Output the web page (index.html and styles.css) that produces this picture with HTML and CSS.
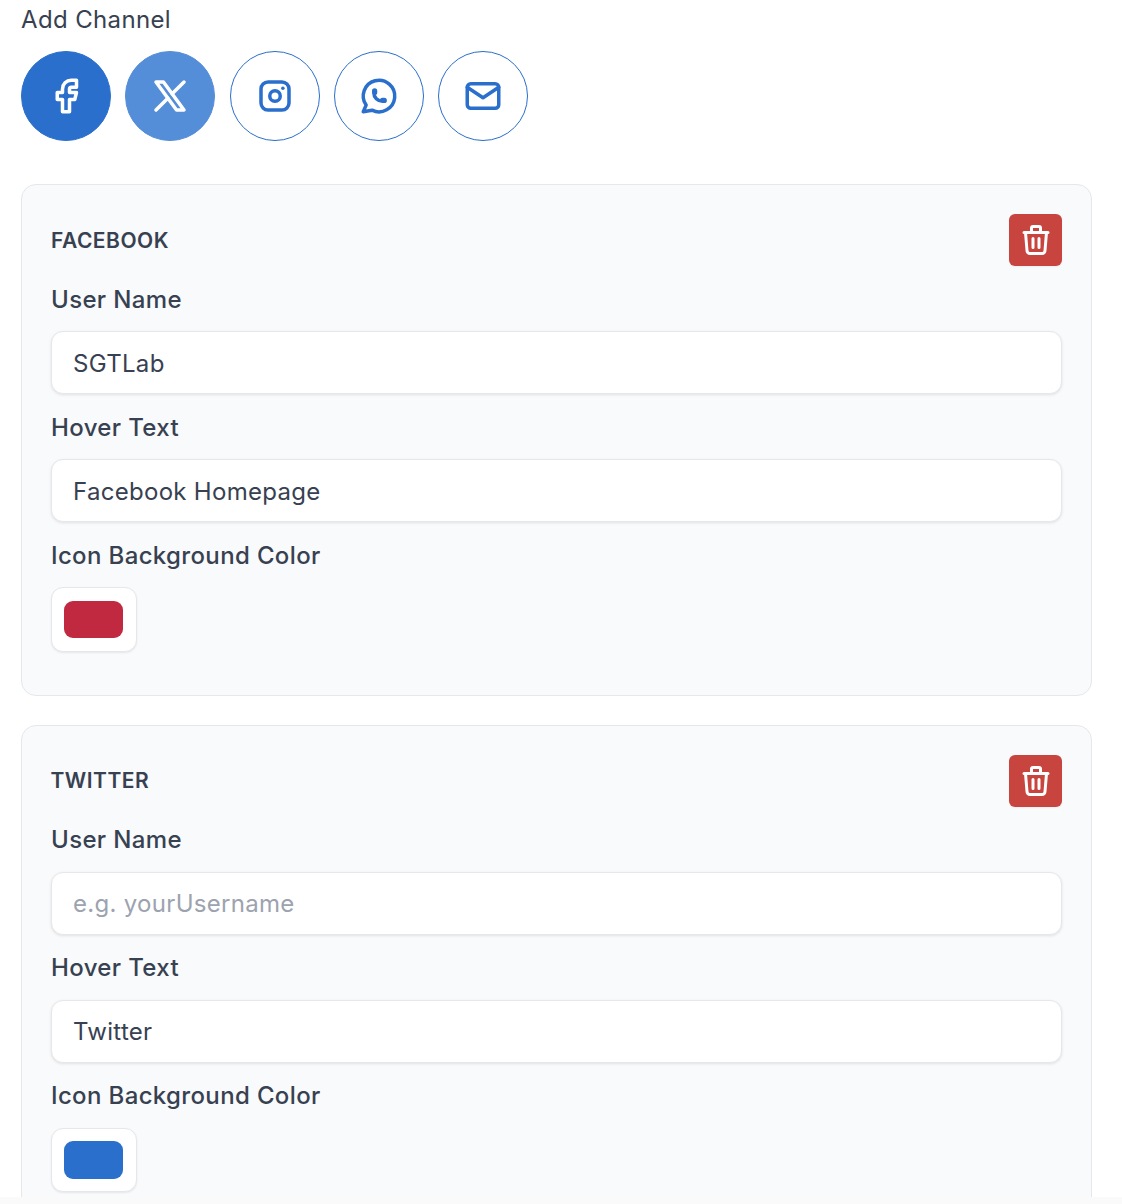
FILE: index.html
```html
<!DOCTYPE html>
<html lang="en">
<head>
<meta charset="utf-8">
<title>Add Channel</title>
<link rel="stylesheet" href="styles.css">
</head>
<body>
<main class="page">
  <div class="add-title">Add Channel</div>
  <div class="channels">
    <button class="channel active" type="button"><svg class="ch-icon" viewBox="0 0 24 24"><path d="M7 10v4h3v7h4v-7h3l1 -4h-4v-2a1 1 0 0 1 1 -1h3v-4h-3a5 5 0 0 0 -5 5v2h-3"/></svg></button>
    <button class="channel active-soft" type="button"><svg class="ch-icon" viewBox="0 0 24 24"><path d="M4 4l11.733 16h4.267l-11.733 -16z"/><path d="M4 20l6.768 -6.768m2.46 -2.46l6.772 -6.772"/></svg></button>
    <button class="channel" type="button"><svg class="ch-icon" viewBox="0 0 24 24"><rect x="4" y="4" width="16" height="16" rx="4"/><circle cx="12" cy="12" r="3"/><path d="M16.5 7.5v.01"/></svg></button>
    <button class="channel" type="button"><svg class="ch-icon" viewBox="0 0 24 24"><path d="M3 21l1.65 -3.8a9 9 0 1 1 3.4 2.9l-5.05 .9"/><path d="M9 10a.5 .5 0 0 0 1 0v-1a.5 .5 0 0 0 -1 0v1a5 5 0 0 0 5 5h1a.5 .5 0 0 0 0 -1h-1a.5 .5 0 0 0 0 1"/></svg></button>
    <button class="channel" type="button"><svg class="ch-icon" viewBox="0 0 24 24"><rect x="3" y="5" width="18" height="14" rx="2"/><path d="M3 7l9 6l9 -6"/></svg></button>
  </div>

  <section class="card">
    <header class="card-head">
      <h2 class="card-title">FACEBOOK</h2>
      <button class="delete" type="button"><svg class="trash" viewBox="0 0 24 24"><path d="M4 7h16M10 11v6M14 11v6M5 7l1 12a2 2 0 0 0 2 2h8a2 2 0 0 0 2 -2l1 -12M9 7v-3a1 1 0 0 1 1 -1h4a1 1 0 0 1 1 1v3"/></svg></button>
    </header>
    <label class="field-label">User Name</label>
    <input class="field" type="text" value="SGTLab" placeholder="e.g. yourUsername">
    <label class="field-label">Hover Text</label>
    <input class="field" type="text" value="Facebook Homepage">
    <label class="field-label">Icon Background Color</label>
    <div class="swatch-box"><div class="swatch swatch-red"></div></div>
  </section>

  <section class="card card-clipped">
    <header class="card-head">
      <h2 class="card-title">TWITTER</h2>
      <button class="delete" type="button"><svg class="trash" viewBox="0 0 24 24"><path d="M4 7h16M10 11v6M14 11v6M5 7l1 12a2 2 0 0 0 2 2h8a2 2 0 0 0 2 -2l1 -12M9 7v-3a1 1 0 0 1 1 -1h4a1 1 0 0 1 1 1v3"/></svg></button>
    </header>
    <label class="field-label">User Name</label>
    <input class="field" type="text" placeholder="e.g. yourUsername">
    <label class="field-label">Hover Text</label>
    <input class="field" type="text" value="Twitter">
    <label class="field-label">Icon Background Color</label>
    <div class="swatch-box"><div class="swatch swatch-blue"></div></div>
  </section>
</main>
</body>
</html>
```

FILE: styles.css
```css
* { box-sizing: border-box; }
html, body { margin: 0; height: 100%; overflow: hidden; background: #fafafa; }
body { font-family: Inter, "Noto Sans", sans-serif; color: #374151; }

.page {
  height: 1197px;
  overflow: hidden;
  background: #fff;
  padding: 1px 30px 0 21px;
}
.add-title { font-size: 24px; line-height: 36px; margin-bottom: 14px; letter-spacing: 0.36px; padding-top: 1px; height: 36px; }
.channels { display: flex; gap: 14.3px; margin-bottom: 43px; }
.channel {
  width: 90px; height: 90px; padding: 0;
  display: flex; align-items: center; justify-content: center;
  border: 1px solid #2a6fcb; border-radius: 50%;
  background: #fff; color: #2a6fcb;
}
.channel.active { background: #2a6fcb; color: #fff; }
.channel.active-soft { background: #548dd8; border-color: #548dd8; color: #fff; }
.ch-icon {
  width: 42px; height: 42px;
  fill: none; stroke: currentColor; stroke-width: 2;
  stroke-linecap: round; stroke-linejoin: round;
}

.card {
  height: 512px;
  margin-bottom: 29px;
  padding: 29px 29px 0;
  background: #f9fafb;
  border: 1px solid #e5e7eb;
  border-radius: 15px;
}
.card-head { display: flex; justify-content: space-between; align-items: center; margin-bottom: 16px; }
.card-title { margin: 0; padding-top: 1px; font-size: 21px; line-height: 30px; font-weight: 600; letter-spacing: 0.5px; }
.delete {
  width: 53px; height: 52px; padding: 0;
  display: flex; align-items: center; justify-content: center;
  border: 0; border-radius: 6px;
  background: #c8443f; color: #fff;
  box-shadow: 0 1px 2px rgba(0,0,0,.05);
}
.trash {
  width: 36px; height: 36px;
  fill: none; stroke: currentColor; stroke-width: 2;
  stroke-linecap: round; stroke-linejoin: round;
}
.field-label { display: block; font-size: 24px; line-height: 36px; font-weight: 450; margin-bottom: 13px; letter-spacing: 0.36px; }
.field {
  display: block; width: 100%; height: 63px;
  margin-bottom: 16px;
  padding: 2px 21px 0;
  font: 400 24px Inter, "Noto Sans", sans-serif;
  letter-spacing: 0.3px;
  color: #374151;
  background: #fff;
  border: 1px solid #e5e7eb;
  border-radius: 12px;
  box-shadow: 0 1px 3px rgba(0,0,0,.1);
  outline: none;
}
.field::placeholder { color: #9ca3af; opacity: 1; }
.swatch-box {
  width: 86px; height: 65px;
  padding-right: 1px;
  display: flex; align-items: center; justify-content: center;
  background: #fff;
  border: 1px solid #e5e7eb;
  border-radius: 12px;
  box-shadow: 0 1px 2px rgba(0,0,0,.08);
}
.swatch { width: 59px; height: 37px; border-radius: 9px; }
.swatch-red { background: #c0293f; }
.swatch-blue { background: #2a6fcb; }

.card-clipped { height: 520px; }
.card-clipped .card-head { margin-bottom: 15px; }
.card-clipped .card-title { padding-top: 0; margin-left: -0.5px; }
.card-clipped .field-label { margin-bottom: 14px; }
.card-clipped .field { padding-top: 0; margin-bottom: 15px; }
.card-clipped .swatch-box { height: 64px; }
.card-clipped .swatch { height: 38px; }
```
